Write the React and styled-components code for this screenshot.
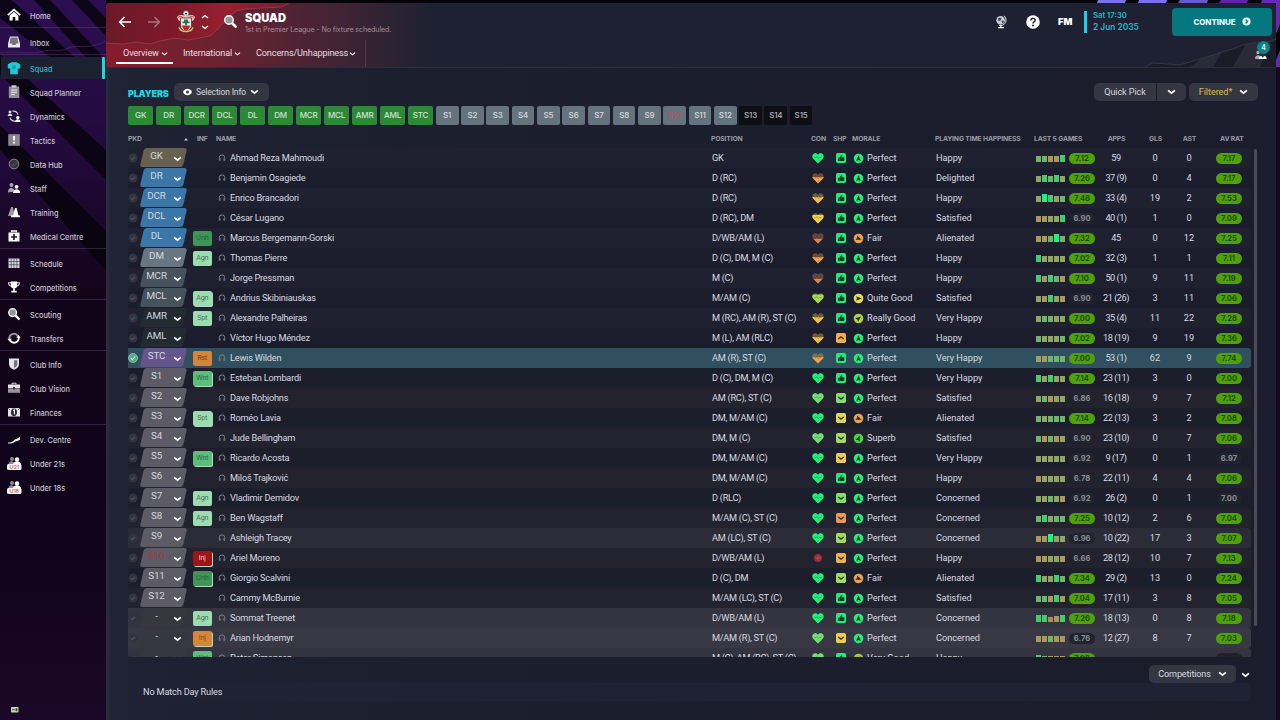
import React from "react";
import styled, { createGlobalStyle, css } from "styled-components";

const GlobalStyle = createGlobalStyle`
  * { box-sizing: border-box; }
  html, body, #root { height: 100%; }
  body {
    margin: 0;
    overflow: hidden;
    background: #0b0210;
    color: #d9dae0;
    font-family: Roboto, "Liberation Sans", sans-serif;
    font-size: 9.2px;
  }
  svg { display: block; flex: none; }
`;

/* ---------- shell ---------- */

const Shell = styled.div`
  position: relative;
  display: flex;
  width: 1280px;
  height: 720px;
  overflow: hidden;
`;

const Backdrop = styled.svg`
  position: absolute;
  inset: 0;
`;

const Sidebar = styled.nav`
  position: relative;
  display: flex;
  flex-direction: column;
  width: 106px;
  padding-top: 3px;
`;

const NavItem = styled.a`
  display: flex;
  align-items: center;
  height: 24px;
  padding-left: 7px;
  gap: 9px;
  font-family: Inter, sans-serif;
  font-size: 7.4px;
  font-weight: 500;
  letter-spacing: -0.02px;
  color: #c9c3d0;
  ${(p) =>
    p.$active &&
    css`
      height: 22px;
      margin: 1px;
      padding-left: 6px;
      color: #22b6c6;
      background: #1b2131;
      border-right: 3px solid #1fd6e6;
      border-radius: 1px;
    `}
`;

const NavIcon = styled.span`
  display: flex;
  width: 14px;
  height: 14px;
`;

const NavLabel = styled.span`
  padding-top: 2px;
`;

const NavRule = styled.div`
  height: ${(p) => p.$h}px;
  border-top: 1px solid rgba(120, 90, 140, 0.33);
`;

const SideFoot = styled.div`
  margin-top: auto;
  padding: 0 0 7px 11px;
`;

const Main = styled.main`
  position: relative;
  display: flex;
  flex-direction: column;
  width: 1170px;
  height: 717px;
  margin-top: 3px;
  border-radius: 4px 4px 0 0;
  overflow: hidden;
  background: linear-gradient(90deg, #272d3d 0, #272d3d 2px, #1f2535 4px, #1e2232 30px, #1c1f2e 300px, #1b1d2b 1100px, #1c1e2f 100%);
`;

const Header = styled.header`
  position: relative;
  height: 65px;
  display: flex;
  flex-direction: column;
  border-bottom: 1px solid #2a2d3c;
`;

const HeaderArt = styled.svg`
  position: absolute;
  inset: 0;
`;

const TopBar = styled.div`
  position: relative;
  display: flex;
  align-items: center;
  height: 37px;
  padding: 0 4px 0 12px;
`;

const Crest = styled.div`
  display: flex;
  align-items: center;
  gap: 5px;
  margin: 1px 15px 0 15px;
`;

const Title = styled.h1`
  margin: 0;
  font: 900 11.2px/14px Inter, sans-serif;
  color: #fff;
`;

const Subtitle = styled.div`
  font: 400 7.2px/9px Inter, sans-serif;
  letter-spacing: -0.15px;
  color: #a48d98;
  white-space: nowrap;
`;

const TitleBlock = styled.div`
  margin: 2px 0 0 8px;
  width: 400px;
`;

const TopRight = styled.div`
  display: flex;
  align-items: center;
  margin-left: auto;
`;

const FmMark = styled.span`
  width: 28px;
  margin-left: 12px;
  padding-left: 6px;
  font: 900 9.3px/12px Inter, sans-serif;
  color: #fff;
`;

const DateBox = styled.div`
  width: 78px;
  height: 22px;
  margin: 0 10px 0 0;
  padding-left: 6px;
  border-left: 3px solid #19d3e4;
  color: #22b9c8;
  white-space: nowrap;
`;

const Clock = styled.div`
  font: 600 7.7px/10px Inter, sans-serif;
`;

const Today = styled.div`
  font: 600 8.4px/12px Inter, sans-serif;
`;

const Continue = styled.button`
  display: flex;
  align-items: center;
  justify-content: center;
  gap: 6px;
  width: 100px;
  height: 28px;
  padding: 0;
  border: 0;
  border-radius: 4px;
  background: #04777f;
  font: 800 7.9px/10px Inter, sans-serif;
  color: #eafafa;
`;

const Tabs = styled.div`
  position: relative;
  display: flex;
  align-items: center;
  height: 27px;
  padding-left: 10px;
`;

const Tab = styled.button`
  display: flex;
  align-items: center;
  justify-content: space-between;
  width: ${(p) => p.$w}px;
  height: 21px;
  margin: 0 3px 0 0;
  padding: 1px 5px 0 7px;
  border: 0;
  border-bottom: 2px solid ${(p) => (p.$active ? "#fff" : "transparent")};
  background: none;
  font: 400 9.2px/12px Roboto, sans-serif;
  letter-spacing: -0.18px;
  color: #e5dde2;
  white-space: nowrap;
`;

const TabRule = styled.i`
  width: 1px;
  height: 27px;
  margin-left: 1px;
  background: rgba(150, 120, 135, 0.28);
`;

const StaffAlert = styled.div`
  position: absolute;
  right: 5px;
  bottom: 6px;
  width: 18px;
  height: 20px;
`;

const AlertCount = styled.span`
  position: absolute;
  right: 1px;
  top: 0;
  width: 13px;
  height: 13px;
  border-radius: 50%;
  background: #0d8088;
  font: 600 7px/13px Inter, sans-serif;
  color: #dff;
  text-align: center;
`;

const AlertIcon = styled.svg`
  position: absolute;
  left: 1px;
  bottom: 1px;
`;

/* ---------- content ---------- */

const Content = styled.section`
  display: flex;
  flex-direction: column;
  padding: 15px 18px 0 22px;
`;

const Toolbar = styled.div`
  display: flex;
  align-items: center;
  height: 18px;
`;

const Heading = styled.h2`
  width: 45.5px;
  margin: 3px 0 0;
  font: 900 9px/12px Inter, sans-serif;
  letter-spacing: -0.2px;
  color: #23d5e8;
`;

const Button = styled.button`
  display: flex;
  align-items: center;
  justify-content: center;
  gap: ${(p) => p.$gap || 6}px;
  width: ${(p) => p.$w}px;
  height: 18px;
  padding: 0 0 1px;
  border: 0;
  border-radius: ${(p) => p.$radius || "5px"};
  background: #343642;
  font: 400 ${(p) => p.$size || 9.1}px/12px Roboto, sans-serif;
  letter-spacing: ${(p) => p.$track || 0}px;
  color: ${(p) => p.$color || "#d8d8de"};
  white-space: nowrap;
`;

const ToolbarEnd = styled.div`
  display: flex;
  margin-left: auto;
`;

const SplitButton = styled.div`
  display: flex;
  gap: 1px;
  margin-right: 3px;
`;

const Chips = styled.div`
  display: flex;
  gap: 2.6px;
  margin-top: 5px;
`;

const chipTone = {
  on: css`width: 25.4px; background: #2c8936; color: #cfe3d0;`,
  sub: css`width: 22.7px; background: #65737d; color: #d6dade;`,
  off: css`width: 22.7px; background: #0d0f15; color: #b3b5ba;`,
};

const Chip = styled.span`
  flex: none;
  height: 19px;
  border-radius: 2px;
  font: 500 8px/19px Inter, sans-serif;
  letter-spacing: -0.15px;
  text-align: center;
  ${(p) => chipTone[p.$tone]}
  ${(p) => p.$hurt && "color: #b4535a;"}
`;

const HeadRow = styled.div`
  display: grid;
  grid-template-columns: 55px 14px 19px 495px 100px 22px 19px 83px 99px 65px 35px 43px 25px 1fr;
  align-items: center;
  height: 14px;
  margin: 7px 0 2px;
  font: 700 6.8px/10px Inter, sans-serif;
  letter-spacing: -0.16px;
  color: #9a9ba5;
  white-space: nowrap;
`;

const HeadCell = styled.span`
  ${(p) => p.$center && "text-align: center;"}
  ${(p) => p.$indent && `padding-left: ${p.$indent}px;`}
`;

const ListWrap = styled.div`
  display: flex;
  gap: 3px;
  height: 509px;
`;

const List = styled.div`
  width: 1123px;
  overflow: hidden;
`;

const ScrollThumb = styled.i`
  width: 3px;
  height: 477px;
  margin-top: 1px;
  border-radius: 2px;
  background: #484a58;
`;

const rowBg = {
  a: "#1f2130",
  b: "#1b1d2c",
  c: "#22232f",
  d: "#1d1e2c",
  hover: "#2b2c38",
  pick: "#31505f",
  r1: "#33343f",
  r2: "#373843",
};

const Row = styled.div`
  display: grid;
  grid-template-columns: 12px 53px 24px 13px 482px 95px 22px 24px 14px 69px 100px 33px 30px 34px 44px 24px 50px;
  align-items: center;
  height: 20px;
  border-radius: 0 3px 3px 0;
  background: ${(p) => rowBg[p.$bg]};
  white-space: nowrap;
`;

const cellKind = {
  name: css`letter-spacing: -0.2px;`,
  pos: css`letter-spacing: -0.24px; word-spacing: -0.1px;`,
  apps: css`letter-spacing: -0.5px; text-align: center;`,
  num: css`text-align: center;`,
  text: css`letter-spacing: -0.02px;`,
};

const Cell = styled.span`
  padding-bottom: 1px;
  line-height: 12px;
  ${(p) => cellKind[p.$kind]}
`;

const IconCell = styled.span`
  display: flex;
  justify-content: ${(p) => (p.$start ? "flex-start" : "center")};
`;

const Slot = styled.span`
  position: relative;
  display: flex;
  align-items: center;
  width: 48px;
  height: 20px;
  isolation: isolate;
  font-size: 9.8px;
  letter-spacing: -0.1px;
  color: ${(p) => (p.$hurt ? "#a33a42" : "#d3d6db")};
  &::before {
    content: "";
    position: absolute;
    z-index: -1;
    left: 2px;
    right: 3px;
    top: 0;
    height: 18.8px;
    border-radius: 2.5px;
    transform: skewX(-13deg);
    background: ${(p) => p.$color};
  }
`;

const SlotText = styled.span`
  width: 33px;
  padding: 0 0 5px 0;
  line-height: 12px;
  text-align: center;
`;

const infoTone = {
  Unh: ["#419458", "#1f5f38"],
  Agn: ["#9cdcb0", "#3c6e51"],
  Spt: ["#9cdcb0", "#3c6e51"],
  Wnt: ["#5dbd7c", "#1f6b40"],
  Rst: ["#d8853c", "#6b3d18"],
  Inj: ["#d8853c", "#7a4412"],
  InjRed: ["#a01318", "#f0d6d6"],
};

const Info = styled.span`
  display: block;
  width: 18.6px;
  height: 15px;
  border-radius: 2px;
  background: ${(p) => infoTone[p.$tone][0]};
  color: ${(p) => infoTone[p.$tone][1]};
  font: 400 6.6px/15px Inter, sans-serif;
  letter-spacing: -0.1px;
  text-align: center;
  ${(p) => p.$stack && "box-shadow: 1px 1px 0 #a9dcb8;"}
`;

const Games = styled.span`
  display: flex;
  align-items: flex-end;
  gap: 1px;
  height: 8px;
`;

const gameTone = {
  0: ["#b8865a", 5],
  1: ["#ab985e", 6],
  2: ["#92a566", 6],
  3: ["#6fb56d", 6.5],
  4: ["#44cb72", 7],
  5: ["#1cf37b", 8],
};

const Game = styled.i`
  width: 5px;
  height: ${(p) => gameTone[p.$n][1]}px;
  background: ${(p) => gameTone[p.$n][0]};
`;

const Pill = styled.span`
  display: block;
  width: 26px;
  height: 11px;
  border-radius: 6px;
  background: ${(p) => (p.$low ? "#20222c" : "#4fa00c")};
  color: ${(p) => (p.$low ? "#8b8d97" : "#1d4e08")};
  font: 700 7.6px/11.5px Inter, sans-serif;
  text-align: center;
  ${(p) => p.$last && "margin-left: 15px;"}
`;

const Footer = styled.div`
  display: flex;
  justify-content: flex-end;
  align-items: center;
  gap: 5px;
  height: 18px;
  margin-top: 8px;
  padding-right: 8px;
`;

const Rules = styled.div`
  height: 18px;
  margin: 0 8px 0 9px;
  padding-left: 6px;
  background: #1f2232;
  font: 400 9.2px/17px Roboto, sans-serif;
  letter-spacing: -0.17px;
`;

/* ---------- icons ---------- */

const Chevron = ({ s = 8, w = 1.6, up, c = "#fff" }) => (
  <svg width={s} height={s} viewBox="0 0 8 8" fill="none" stroke={c} strokeWidth={w}>
    <path d={up ? "M1 5.5 4 3l3 2.5" : "M1 3l3 2.5L7 3"} />
  </svg>
);

const navShapes = {
  home: <><path d="M.8 7.2 7 1.6 13.2 7.2" fill="none" stroke="#fff" strokeWidth="1.7" /><path d="M2.6 7.6 7 3.8l4.400 3.800v4.900H8.300V9H5.700v3.500H2.600z" fill="#fff" /></>,
  inbox: <><path d="M3 1.5h8l2 7v4H1v-4z" fill="#e8e6ea" /><path d="M3.6 2.6h6.800l1 5.900H9.300L8.500 10h-3l-.8-1.500H2.600z" fill="#77727c" /></>,
  squad: <><path d="M4.600 1.200h4.800L13.200 3.300v4l-2.400.4v5.500H3.200V7.700L.8 7.300v-4z" fill="#22c8d8" /><path d="M5.600 4.600h1v3.200h-1zM7.500 4.600h1v3.200h-1z" fill="#107f92" /></>,
  planner: <><path d="M1.800 1.500h10.400v11.500H1.800z" fill="#918b97" /><path d="M4.600.3h4.800v2.200H4.600z" fill="#d5d1d9" /><path d="M4 5h6M4 7.300h6M4 9.600h4" stroke="#eee" strokeWidth="1" /></>,
  dynamics: <><path d="M5.500 2.200a5 5 0 0 1 5.500 3.500M8.500 12a5 5 0 0 1-5.500-3.500" fill="none" stroke="#cbc7d0" strokeWidth="1.200" /><circle cx="3" cy="3" r="1.500" fill="#ddd" /><path d="M.7 7c0-3 4.600-3 4.600 0z" fill="#ddd" /><circle cx="10.800" cy="8.600" r="1.700" fill="#fff" /><path d="M8 13c0-3.600 5.600-3.600 5.600 0z" fill="#fff" /></>,
  tactics: <><path d="M1.200 1.200h11.600v11.600H1.200z" fill="#8b8591" /><path d="M5.900 3h2.200l-.3 4.500H6.200zM6.100 8.800h1.800v1.700H6.100z" fill="#fff" /></>,
  data: <><circle cx="7" cy="7" r="4.800" fill="#34303c" stroke="#8d8796" strokeWidth="1" /><path d="M4 9.500 9.500 4M5.500 10.500l5-5" stroke="#555062" strokeWidth=".8" /></>,
  staff: <><circle cx="4.500" cy="4" r="2" fill="#aaa5b0" /><path d="M1 11.500c0-6 6-6 6.500-1z" fill="#aaa5b0" /><circle cx="9.600" cy="5.800" r="1.900" fill="#fff" /><path d="M6 12c0-5 7-5 7.200 0z" fill="#fff" /></>,
  training: <><path d="M4.200 2h1.600L8 11H1z" fill="#a09aa6" /><path d="M8 3h1.600l1.900 7.500H13V12.300H4v-1.800h2z" fill="#fff" /></>,
  medical: <><path d="M4.500 3.300V2h5v1.300" fill="none" stroke="#fff" strokeWidth="1.300" /><path d="M1.500 3.500h11v9h-11z" fill="#fff" /><path d="M7 5v6M4 8h6" stroke="#222" strokeWidth="1.700" /></>,
  schedule: <><path d="M1.500 2.500h11v9.500h-11z" fill="#d8d4dc" /><path d="M4.200 2.500V12M7 2.500V12M9.800 2.500V12M1.500 5.500h11M1.500 8.700h11" stroke="#4b4453" strokeWidth=".7" /></>,
  trophy: <><path d="M3.800 1.500h6.400v3.800a3.200 3.200 0 0 1-6.400 0zM6.200 7.500h1.600v3.300H6.200zM4.300 10.700h5.400v1.900H4.300z" fill="#fff" /><path d="M4 2.800H1.600c0 2 1 3.200 2.800 3.200M10 2.800h2.400c0 2-1 3.200-2.800 3.200" fill="none" stroke="#ddd" strokeWidth="1.100" /></>,
  search: <><circle cx="5.600" cy="5.600" r="3.900" fill="#98939d" stroke="#fff" strokeWidth="1.300" /><path d="m8.600 8.600 3.900 3.900" stroke="#fff" strokeWidth="2.400" /></>,
  transfers: <><path d="M2.500 8.500a4.600 4.600 0 0 1 8.500-3.300" fill="none" stroke="#99939f" strokeWidth="1.900" /><path d="M11.500 5.800A4.600 4.600 0 0 1 3 9.200" fill="none" stroke="#fff" strokeWidth="1.900" /><path d="M9.300 6.800h4.400L11.500 4zM.5 7.800h4.400L2.700 10.500z" fill="#fff" /></>,
  shield: <><path d="M2 1.500h10V7c0 3-2 4.600-5 5.800C4 11.600 2 10 2 7z" fill="#e8e5ea" /><path d="M7 3.200h3.300V7c0 2-1.200 3-3.300 4z" fill="#77717d" /></>,
  vision: <><path d="M5 3.500V2.200h4v1.300" fill="none" stroke="#ddd" strokeWidth="1" /><path d="M1 3.500h12V7H1z" fill="#e5e2e8" /><path d="M1 7.300h12v4.500H1z" fill="#99939f" /><path d="M6 6h2v2.400H6z" fill="#333" /></>,
  finances: <><path d="M1 3h12v8.500H1z" fill="#e5e2e8" /><path d="M7 3.400c2.400 0 3 2 3 3.800s-.6 3.900-3 3.900-3-2-3-3.900.6-3.800 3-3.800z" fill="#2a2331" /><path d="M6 5.600l1.400-.6v4.300" fill="none" stroke="#fff" strokeWidth="1.200" /><path d="M1 3l2 2M13 3l-2 2" stroke="#766f7d" /></>,
  dev: <path d="M1 10.500c3 0 5-.8 6.500-2.800 1-.8 2.500-.2 5.500-3.200v3.200c-2 1.500-3.800 1-5 2-1.500 1.500-4 2-7 1.700z" fill="#eee" />,
};

const Youth = ({ label }) => (
  <svg width="15" height="15" viewBox="0 0 15 15">
    <circle cx="5" cy="3" r="2" fill="#8f8996" />
    <circle cx="10" cy="3.5" r="2.2" fill="#fff" />
    <path d="M1.5 9c0-5 6-5 6.500 0z" fill="#8f8996" />
    <path d="M6 9c0-5 8-5 8 0z" fill="#fff" />
    <rect x="0" y="8" width="14.5" height="6" rx="1.5" fill="#f4f0f2" />
    <text x="7.2" y="13" fontFamily="Inter, sans-serif" fontSize="5.4" fontWeight="500" fill="#b8626a" textAnchor="middle">{label}</text>
  </svg>
);

const NavGlyph = ({ name }) =>
  name === "U21" || name === "U18" ? (
    <Youth label={name} />
  ) : (
    <svg width="14" height="14" viewBox="0 0 14 14">{navShapes[name]}</svg>
  );

const Arrow = ({ dim, left }) => (
  <svg width="14" height="14" viewBox="0 0 14 14" fill="none" stroke={dim ? "#a87480" : "#fff"} strokeWidth="1.5">
    <path d={left ? "M13 7H2M6.500 2 1.700 7l4.800 5" : "M1 7h11M7.500 2l4.800 5-4.800 5"} />
  </svg>
);

const ClubCrest = () => (
  <svg width="20" height="24" viewBox="0 0 20 24">
    <circle cx="10" cy="3.5" r="3" fill="#e9e4dc" stroke="#333" strokeWidth=".7" />
    <path d="M8.700 3h2.600l-.8 1.600H9.500z" fill="#222" />
    <path d="M1 7c2-3 5-2 9-1 4-1 7-2 9 1-1 3-2 4-4 4.500H5C3 11 2 10 1 7z" fill="#e9b9b8" />
    <path d="M2 7.500c2-2 4-1 5 .5M18 7.500c-2-2-4-1-5 .5" stroke="#c0303a" fill="none" />
    <path d="M4.500 8h11v7c0 4-3 6-5.500 7-2.500-1-5.500-3-5.500-7z" fill="#f1eeea" stroke="#7a1b25" strokeWidth=".8" />
    <path d="M6 15.500h8c-.5 3-2 4.500-4 5.500-2-1-3.500-2.500-4-5.500z" fill="#c5202e" />
    <path d="M8 9.500h4v2h1.500v1.800H11v2H9v-2H6.500v-1.800H8z" fill="#1f7a4f" />
    <path d="M2 17.500c2 4.500 5 5 8 5s6-.5 8-5l-1.500-1C15 20 13 20.500 10 20.500S5 20 3.500 16.500z" fill="#d9c56a" stroke="#4b2d20" strokeWidth=".5" />
  </svg>
);

const Globe = () => (
  <svg width="12" height="14" viewBox="0 0 12 14">
    <circle cx="5.600" cy="5.200" r="4.300" fill="#c9cad0" />
    <path d="M3 3.500l2-1 1.500 1-1 2-2 .5zM6.500 6l2-.5.3 1.500-1.500 1.500z" fill="#3f4250" />
    <path d="M9 .8a5.600 5.600 0 0 1-1.500 9.500H4" fill="none" stroke="#fff" strokeWidth=".9" />
    <path d="M5.200 10h1.200v2H9v1.300H3V12h2.200z" fill="#fff" />
  </svg>
);

const Help = () => (
  <svg width="14" height="14" viewBox="0 0 14 14">
    <circle cx="7" cy="7" r="6.800" fill="#fff" />
    <path d="M4.900 5.500c0-3 4.300-2.600 4.300-.2C9.200 6.800 7 6.800 7 8.400" fill="none" stroke="#1c1f2e" strokeWidth="1.500" />
    <circle cx="7" cy="10.500" r="1" fill="#1c1f2e" />
  </svg>
);

const GoCircle = () => (
  <svg width="9" height="9" viewBox="0 0 9 9">
    <circle cx="4.500" cy="4.500" r="4.100" fill="#eafafa" />
    <path d="M3.600 2.500l2 2-2 2" fill="none" stroke="#04777f" strokeWidth="1.300" />
  </svg>
);

const Eye = () => (
  <svg width="9" height="8" viewBox="0 0 9 8">
    <path d="M0 4c2-4.300 7-4.300 9 0-2 4.300-7 4.300-9 0z" fill="#fff" />
    <circle cx="4.500" cy="4" r="1.500" fill="#343642" />
  </svg>
);

const Tick = ({ on }) => (
  <svg width="10" height="10" viewBox="0 0 10 10">
    <circle cx="5" cy="5" r="4.500" fill={on ? "#4fae8d" : "#31333e"} stroke={on ? "#b9c3b0" : "none"} strokeWidth=".7" />
    <path d="M2.800 5.200l1.600 1.500 2.800-3" fill="none" stroke={on ? "#bff0dc" : "#50525d"} strokeWidth="1.100" />
  </svg>
);

const Head = () => (
  <svg width="10" height="10" viewBox="0 0 10 10" fill="none" stroke="#7e808b">
    <path d="M2.300 7.800V4.600a2.700 2.700 0 0 1 5.400 0v3.200" strokeWidth="1" />
    <path d="M3.300 5.200v2.400M6.700 5.200v2.400" strokeWidth="1" opacity=".7" />
  </svg>
);

const heartPath = "M6 11.500 1.500 7C.3 5.700.3 4.900.4 4 .6 2.400 1.700 1.300 3.300 1.300c1.200 0 2.100.6 2.700 1.500.6-.9 1.500-1.500 2.700-1.500 1.600 0 2.700 1.100 2.900 2.700.1.900.1 1.700-1.100 3z";

const Heart = ({ kind }) => {
  if (kind === "inj")
    return (
      <svg width="12" height="12" viewBox="0 0 12 12">
        <circle cx="6" cy="6" r="4" fill="#8f3037" />
        <path d="M6 3.500v5M3.500 6h5" stroke="#b3444a" strokeWidth="1.400" />
      </svg>
    );
  const [color, cut] = {
    g: ["#1cf079", 0],
    l: ["#72e070", 0],
    y: ["#a9d957", 2.5],
    w: ["#efd04f", 3],
    a: ["#efbf4d", 5],
    o: ["#ee9f49", 5],
    b: ["#dc8452", 6.8],
  }[kind];
  return (
    <svg width="12" height="12" viewBox="0 0 12 12">
      <defs>
        <clipPath id={`heart-${kind}`}><rect y={cut} width="12" height="12" /></clipPath>
      </defs>
      <path d={heartPath} fill={color} opacity=".38" />
      <path d={heartPath} fill={color} clipPath={`url(#heart-${kind})`} />
      <path d="M2.500 5.500h1.700l.8-1 1.400 2 1-1h2" fill="none" stroke="#1c2a2a" strokeOpacity=".4" strokeWidth=".7" />
    </svg>
  );
};

const sharpColor = { l: "#7fe06a", y: "#dfd556", a: "#9fdc62", w: "#efcb52", o: "#efb050", r: "#ee9850", up: "#efae50" };

const Sharp = ({ kind }) => (
  <svg width="10" height="10" viewBox="0 0 10 10">
    <rect width="10" height="10" rx="1.700" fill={kind === "g" ? "#1cf079" : sharpColor[kind]} />
    {kind === "g" ? (
      <path d="M2 4.800h1.100V8H2zM3.300 4.700 5.400 2c1 0 1 .8.700 2.200h2c.4 0 .5 3.800-.6 3.800H3.300z" fill="#143d30" />
    ) : (
      <path d={kind === "up" ? "M2.200 6 5 3.900 7.800 6" : "M2.200 4 5 6.100 7.800 4"} fill="none" stroke="#3a3a25" strokeWidth="1.400" />
    )}
  </svg>
);

const moraleMap = {
  Perfect: ["#1cf079", 0],
  Superb: ["#46d83a", 20],
  "Really Good": ["#b4d23c", 50],
  "Very Good": ["#a6c83c", 50],
  "Quite Good": ["#e8dc50", 90],
  Fair: ["#eda04c", 112],
};

const Morale = ({ kind }) => {
  const [color, deg] = moraleMap[kind];
  return (
    <svg width="11" height="11" viewBox="0 0 11 11">
      <circle cx="5.500" cy="5.500" r="4.800" fill={color} />
      <path d="M5.500 2.200 7.800 8 5.500 7 3.200 8z" fill="#173127" transform={`rotate(${deg} 5.500 5.500)`} />
    </svg>
  );
};

/* ---------- data ---------- */

const navGroups = [
  { gap: 3, items: [["home", "Home"]] },
  { gap: 2, items: [["inbox", "Inbox"]] },
  { gap: 3, items: [["squad", "Squad"], ["planner", "Squad Planner"], ["dynamics", "Dynamics"], ["tactics", "Tactics"], ["data", "Data Hub"], ["staff", "Staff"], ["training", "Training"], ["medical", "Medical Centre"]] },
  { gap: 3, items: [["schedule", "Schedule"], ["trophy", "Competitions"]] },
  { gap: 2, items: [["search", "Scouting"], ["transfers", "Transfers"]] },
  { gap: 3, items: [["shield", "Club Info"], ["vision", "Club Vision"], ["finances", "Finances"]] },
  { gap: 0, items: [["dev", "Dev. Centre"], ["U21", "Under 21s"], ["U18", "Under 18s"]] },
];

const slotColor = {
  GK: "#686050", DR: "#3b76a7", DCR: "#3b76a7", DCL: "#3b76a7", DL: "#3b76a7",
  DM: "#687682", MCR: "#46525c", MCL: "#46525c", AMR: "#222b32", AML: "#222b32", STC: "#64568c", "-": "#36383f",
};

/* slot, info, name, position, condition, sharpness, morale, happiness, form, form rating, apps, goals, assists, average, background */
const players = [
  ["GK", "", "Ahmad Reza Mahmoudi", "GK", "g", "g", "Perfect", "Happy", "33114", "7.12", "59", 0, 0, "7.17", "a"],
  ["DR", "", "Benjamin Osagiede", "D (RC)", "o", "g", "Perfect", "Delighted", "24342", "7.26", "37 (9)", 0, 4, "7.17", "b"],
  ["DCR", "", "Enrico Brancadori", "D (RC)", "a", "g", "Perfect", "Happy", "25423", "7.48", "33 (4)", 19, 2, "7.53", "a"],
  ["DCL", "", "César Lugano", "D (RC), DM", "w", "g", "Perfect", "Satisfied", "11224", "6.90", "40 (1)", 1, 0, "7.09", "b"],
  ["DL", "Unh", "Marcus Bergemann-Gorski", "D/WB/AM (L)", "b", "g", "Fair", "Alienated", "11353", "7.32", "45", 0, 12, "7.25", "a"],
  ["DM", "Agn", "Thomas Pierre", "D (C), DM, M (C)", "o", "g", "Perfect", "Happy", "42222", "7.02", "32 (3)", 1, 1, "7.11", "b"],
  ["MCR", "", "Jorge Pressman", "M (C)", "b", "g", "Perfect", "Happy", "41431", "7.10", "50 (1)", 9, 11, "7.19", "a"],
  ["MCL", "Agn+", "Andrius Skibiniauskas", "M/AM (C)", "y", "g", "Quite Good", "Satisfied", "21421", "6.90", "21 (26)", 3, 11, "7.06", "b"],
  ["AMR", "Spt", "Alexandre Palheiras", "M (RC), AM (R), ST (C)", "a", "g", "Really Good", "Very Happy", "23322", "7.00", "35 (4)", 11, 22, "7.28", "a"],
  ["AML", "", "Víctor Hugo Méndez", "M (L), AM (RLC)", "a", "up", "Perfect", "Happy", "32223", "7.02", "18 (19)", 9, 19, "7.36", "b"],
  ["STC", "Rst", "Lewis Wilden", "AM (R), ST (C)", "o", "g", "Perfect", "Very Happy", "21333", "7.00", "53 (1)", 62, 9, "7.74", "pick"],
  ["S1", "Wnt+", "Esteban Lombardi", "D (C), DM, M (C)", "g", "g", "Perfect", "Very Happy", "42422", "7.14", "23 (11)", 3, 0, "7.00", "d"],
  ["S2", "", "Dave Robjohns", "AM (RC), ST (C)", "l", "l", "Perfect", "Satisfied", "23122", "6.86", "16 (18)", 9, 7, "7.12", "c"],
  ["S3", "Spt+", "Roméo Lavia", "DM, M/AM (C)", "g", "y", "Fair", "Alienated", "32333", "7.14", "22 (13)", 3, 2, "7.08", "d"],
  ["S4", "", "Jude Bellingham", "DM, M (C)", "l", "a", "Superb", "Satisfied", "31312", "6.90", "23 (10)", 0, 7, "7.06", "c"],
  ["S5", "Wnt+", "Ricardo Acosta", "DM, M/AM (C)", "g", "w", "Perfect", "Very Happy", "22222", "6.92", "9 (17)", 0, 1, "6.97", "d"],
  ["S6", "", "Miloš Trajković", "DM, M/AM (C)", "g", "g", "Perfect", "Happy", "12222", "6.78", "22 (11)", 4, 4, "7.06", "c"],
  ["S7", "Agn", "Vladimir Demidov", "D (RLC)", "g", "l", "Perfect", "Concerned", "22321", "6.92", "26 (2)", 0, 1, "7.00-", "d"],
  ["S8", "Agn", "Ben Wagstaff", "M/AM (C), ST (C)", "g", "r", "Perfect", "Concerned", "34233", "7.25", "10 (12)", 2, 6, "7.04", "c"],
  ["S9", "", "Ashleigh Tracey", "AM (LC), ST (C)", "g", "a", "Perfect", "Concerned", "11522", "6.96", "10 (22)", 17, 3, "7.07", "hover"],
  ["S10", "InjRed+", "Ariel Moreno", "D/WB/AM (L)", "inj", "o", "Perfect", "Happy", "11221", "6.66", "28 (12)", 10, 7, "7.13", "c"],
  ["S11", "Unh+", "Giorgio Scalvini", "D (C), DM", "g", "a", "Fair", "Alienated", "42243", "7.34", "29 (2)", 13, 0, "7.24", "d"],
  ["S12", "", "Cammy McBurnie", "M/AM (LC), ST (C)", "g", "g", "Perfect", "Satisfied", "33141", "7.04", "17 (11)", 3, 8, "7.05", "c"],
  ["-", "Agn", "Sommat Treenet", "D/WB/AM (L)", "g", "g", "Perfect", "Concerned", "44014", "7.26", "18 (13)", 0, 8, "7.18", "r1"],
  ["-", "Inj+", "Arian Hodnemyr", "M/AM (R), ST (C)", "l", "w", "Perfect", "Concerned", "11311", "6.76", "12 (27)", 8, 7, "7.03", "r2"],
  ["-", "Wnt", "Peter Simonsen", "M (C), AM (RC), ST (C)", "l", "g", "Very Good", "Happy", "43111", "7.08", "", "", "", "-", "r1"],
];

const starters = ["GK", "DR", "DCR", "DCL", "DL", "DM", "MCR", "MCL", "AMR", "AML", "STC"];
const subs = Array.from({ length: 15 }, (_, i) => `S${i + 1}`);

const PlayerRow = ({ data }) => {
  const [slot, info, name, pos, con, shp, morale, mood, form, rating, apps, gls, ast, avg, bg] = data;
  const tone = info.replace("+", "");
  const avgText = avg.length > 4 ? avg.slice(0, 4) : avg === "-" ? "" : avg;
  return (
    <Row $bg={bg}>
      <Tick on={bg === "pick"} />
      <Slot $color={slotColor[slot] || "#5c5b66"} $hurt={slot === "S10"}>
        <SlotText>{slot}</SlotText>
        <Chevron s={9} w={1.5} />
      </Slot>
      <IconCell $start>{tone && <Info $tone={tone} $stack={info.endsWith("+")}>{tone.slice(0, 3)}</Info>}</IconCell>
      <Head />
      <Cell $kind="name">{name}</Cell>
      <Cell $kind="pos">{pos}</Cell>
      <IconCell><Heart kind={con} /></IconCell>
      <IconCell><Sharp kind={shp} /></IconCell>
      <IconCell $start><Morale kind={morale} /></IconCell>
      <Cell $kind="text">{morale}</Cell>
      <Cell $kind="text">{mood}</Cell>
      <Games>{[...form].map((n, i) => <Game key={i} $n={n} />)}</Games>
      <Pill $low={rating < "7"}>{rating}</Pill>
      <Cell $kind="apps">{apps}</Cell>
      <Cell $kind="num">{gls}</Cell>
      <Cell $kind="num">{ast}</Cell>
      <Pill $last $low={avg < "7" || avg === "7.00-"}>{avgText}</Pill>
    </Row>
  );
};

const BackdropArt = () => (
  <Backdrop width="1280" height="720" viewBox="0 0 1280 720">
    <defs>
      <linearGradient id="side" x1="0" y1="0" x2="0" y2="1">
        <stop offset="0" stopColor="#2c0f52" />
        <stop offset=".2" stopColor="#220a3c" />
        <stop offset=".42" stopColor="#120418" />
        <stop offset=".75" stopColor="#10031a" />
        <stop offset="1" stopColor="#1b0828" />
      </linearGradient>
    </defs>
    <rect width="1280" height="720" fill="#050308" />
    <rect width="106" height="720" fill="url(#side)" />
    <g fill="#07030d" opacity=".85">
      <path d="M0 18 0 0h12l68 62-6 14zM34 0h16l56 60v20zM72 0h16l18 18v18zM0 54l106 96v30L0 74zM0 125l106 106v40L0 150z" />
    </g>
    <path d="M0 53c16-3 26 2 40-1 12-4 18 1 26-3 10-6 22 2 40-8" fill="none" stroke="#5d3a70" strokeOpacity=".6" strokeWidth=".8" />
    <g>
      <path d="M1098 0h28l-1 3h-28z" fill="#7b70ee" />
      <path d="M1139 0h28l-1 3h-28z" fill="#7b70ee" />
      <path d="M1180 0h28l-1 3h-29z" fill="#6a57d0" />
      <path d="M1221 0h27l-1 3h-28z" fill="#6422a6" />
      <path d="M1262 0h18v24l-4 10V3h-15z" fill="#6a26b4" />
      <path d="M1280 50v17h-4V60z" fill="#6a26b4" />
      <path d="M1276 67h4v653h-4z" fill="#170820" />
    </g>
  </Backdrop>
);

const HeaderBackdrop = () => (
  <HeaderArt width="1170" height="64" viewBox="0 0 1170 64">
    <defs>
      <linearGradient id="wash" x1="0" x2="1" y1="0" y2="0">
        <stop offset="0" stopColor="#861d2b" />
        <stop offset=".35" stopColor="#6a2231" />
        <stop offset=".7" stopColor="#432435" />
        <stop offset="1" stopColor="#1e2131" />
      </linearGradient>
      <linearGradient id="torn" x1="0" x2="1" y1="0" y2="0">
        <stop offset="0" stopColor="#6b1a28" />
        <stop offset=".35" stopColor="#7c1829" />
        <stop offset=".65" stopColor="#962030" />
        <stop offset="1" stopColor="#7a1c2c" />
      </linearGradient>
    </defs>
    <rect width="1170" height="64" fill="#1e2131" />
    <rect width="325" height="64" fill="url(#wash)" />
    <path d="M0 0h183l-8 4-20 1-16 1-9 2-7 6-6 6-6 7-7 6-10 2-12 2-14-2-14 3-10 3-14-2-12 2-18-1z" fill="url(#torn)" />
    <path d="M183 0l-8 4-20 1-16 1-9 2-7 6-6 6-6 7-7 6-10 2-12 2-14-2-14 3-10 3-14-2-12 2-18-1" fill="none" stroke="#b65360" strokeOpacity=".6" strokeWidth=".8" />
    <path d="M1039 64l8-4 14 1 13 1 10-3 10-3 13-4 12-4 8-2 10-4 10-2 14-1 9-3v28z" fill="#1a1c28" />
    <path d="M1084 64l11-8 12-4 9-3-9 15zM1127 64l13-23 21-2 5-2-12 27z" fill="#292c38" />
    <path d="M1039 64l8-4 14 1 13 1 10-3 10-3 13-4 12-4 8-2 10-4 10-2 14-1 9-3" fill="none" stroke="#3a3c48" strokeWidth=".8" />
  </HeaderArt>
);

export default function App() {
  return (
    <>
      <GlobalStyle />
      <Shell>
        <BackdropArt />
        <Sidebar>
          {navGroups.map((group, i) => (
            <React.Fragment key={i}>
              {group.items.map(([icon, label]) => (
                <NavItem key={label} $active={icon === "squad"}>
                  <NavIcon><NavGlyph name={icon} /></NavIcon>
                  <NavLabel>{label}</NavLabel>
                </NavItem>
              ))}
              {group.gap > 0 && <NavRule $h={group.gap} />}
            </React.Fragment>
          ))}
          <SideFoot>
            <svg width="8" height="6" viewBox="0 0 8 6">
              <rect width="7.5" height="5.5" rx=".8" fill="#c5d3b4" />
              <path d="M1 2.700h3M5 1.500l1.500 1.300L5 4z" stroke="#26402b" fill="#26402b" strokeWidth=".8" />
            </svg>
          </SideFoot>
        </Sidebar>
        <Main>
          <Header>
            <HeaderBackdrop />
            <TopBar>
              <Arrow left />
              <svg width="15" height="1" />
              <Arrow dim />
              <Crest>
                <ClubCrest />
                <svg width="8" height="16" viewBox="0 0 8 16" fill="none" stroke="#fff" strokeWidth="1.3">
                  <path d="M1 4l3-2.500L7 4M1 12l3 2.500L7 12" />
                </svg>
              </Crest>
              <svg width="13" height="13" viewBox="1 1 12 12">{navShapes.search}</svg>
              <TitleBlock>
                <Title>SQUAD</Title>
                <Subtitle>1st in Premier League - No fixture scheduled.</Subtitle>
              </TitleBlock>
              <TopRight>
                <Globe />
                <svg width="19" height="1" />
                <Help />
                <FmMark>FM</FmMark>
                <svg width="4" height="1" />
                <DateBox>
                  <Clock>Sat 17:30</Clock>
                  <Today>2 Jun 2035</Today>
                </DateBox>
                <Continue>CONTINUE <GoCircle /></Continue>
              </TopRight>
            </TopBar>
            <Tabs>
              <Tab $w={57} $active>Overview <Chevron s={7} w={1.2} /></Tab>
              <Tab $w={70}>International <Chevron s={7} w={1.2} /></Tab>
              <Tab $w={112}>Concerns/Unhappiness <Chevron s={7} w={1.2} /></Tab>
              <TabRule />
            </Tabs>
            <StaffAlert>
              <AlertIcon width="13" height="11" viewBox="0 0 13 11">
                <circle cx="4" cy="3.5" r="1.7" fill="#aaa" />
                <path d="M1 10c0-5 6-5 6 0z" fill="#aaa" />
                <path d="M5 10c0-4 3.500-4 3.800-.5C9 6 12.500 6 12.700 10z" fill="#fff" />
              </AlertIcon>
              <AlertCount>4</AlertCount>
            </StaffAlert>
          </Header>
          <Content>
            <Toolbar>
              <Heading>PLAYERS</Heading>
              <Button $w={95} $gap={4} $size={8.5} $track={-0.15}><Eye /> Selection Info <Chevron s={9} /></Button>
              <ToolbarEnd>
                <SplitButton>
                  <Button $w={62} $radius="5px 0 0 5px" $track={-0.1}>Quick Pick</Button>
                  <Button $w={29} $radius="0 5px 5px 0"><Chevron s={9} /></Button>
                </SplitButton>
                <Button $w={69} $gap={7} $color="#dcb659" $track={-0.05}>Filtered* <Chevron s={9} /></Button>
              </ToolbarEnd>
            </Toolbar>
            <Chips>
              {starters.map((s) => <Chip key={s} $tone="on">{s}</Chip>)}
              {subs.map((s, i) => <Chip key={s} $tone={i < 12 ? "sub" : "off"} $hurt={s === "S10"}>{s}</Chip>)}
            </Chips>
            <HeadRow>
              <HeadCell>PKD</HeadCell>
              <svg width="6" height="4" viewBox="0 0 6 4"><path d="M1 3.500 3 1l2 2.500z" fill="#c6c7ce" /></svg>
              <HeadCell>INF</HeadCell>
              <HeadCell>NAME</HeadCell>
              <HeadCell>POSITION</HeadCell>
              <HeadCell>CON</HeadCell>
              <HeadCell>SHP</HeadCell>
              <HeadCell>MORALE</HeadCell>
              <HeadCell>PLAYING TIME HAPPINESS</HeadCell>
              <HeadCell>LAST 5 GAMES</HeadCell>
              <HeadCell $center>APPS</HeadCell>
              <HeadCell $center>GLS</HeadCell>
              <HeadCell $center>AST</HeadCell>
              <HeadCell $indent={18}>AV RAT</HeadCell>
            </HeadRow>
            <ListWrap>
              <List>{players.map((p) => <PlayerRow key={p[2]} data={p} />)}</List>
              <ScrollThumb />
            </ListWrap>
            <Footer>
              <Button $w={87} $gap={7} $track={-0.15}>Competitions <Chevron s={9} /></Button>
              <Chevron s={9} />
            </Footer>
            <Rules>No Match Day Rules</Rules>
          </Content>
        </Main>
      </Shell>
    </>
  );
}
